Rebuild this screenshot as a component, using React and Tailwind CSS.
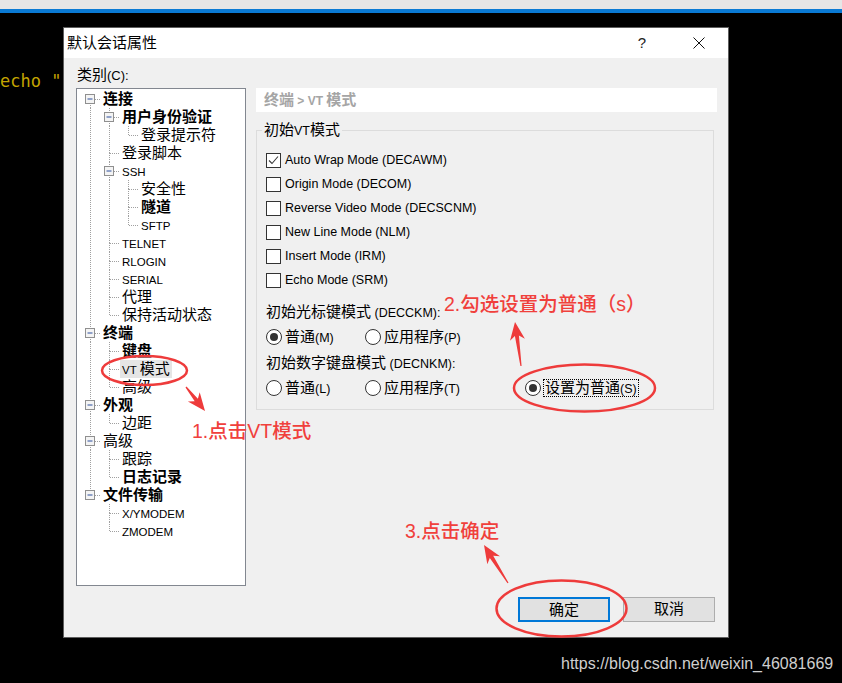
import React from 'react';

const CJK = /([\u2e80-\u9fff\u3000-\u303f\uff00-\uffef]+)/;

// split mixed text so the CJK runs and the latin runs get their own size
function Mixed({ text, cjk = 'text-[15px]', lat = 'text-[12.5px]' }) {
  return (
    <span className="whitespace-pre">
      {text
        .split(CJK)
        .filter(Boolean)
        .map((s, i) => (
          <span key={i} className={CJK.test(s) ? cjk : lat}>
            {s}
          </span>
        ))}
    </span>
  );
}

const TREE = [
  {
    t: '连接', b: true, c: [
      { t: '用户身份验证', b: true, c: [{ t: '登录提示符' }] },
      { t: '登录脚本' },
      { t: 'SSH', c: [{ t: '安全性' }, { t: '隧道', b: true }, { t: 'SFTP' }] },
      { t: 'TELNET' },
      { t: 'RLOGIN' },
      { t: 'SERIAL' },
      { t: '代理' },
      { t: '保持活动状态' },
    ],
  },
  { t: '终端', b: true, c: [{ t: '键盘', b: true }, { t: 'VT 模式', sel: true }, { t: '高级' }] },
  { t: '外观', b: true, c: [{ t: '边距' }] },
  { t: '高级', c: [{ t: '跟踪' }, { t: '日志记录', b: true }] },
  { t: '文件传输', b: true, c: [{ t: 'X/YMODEM' }, { t: 'ZMODEM' }] },
];

function flatten(nodes, depth, guides, out) {
  nodes.forEach((n, i) => {
    const last = i === nodes.length - 1;
    out.push({ ...n, depth, guides, last, first: depth === 0 && i === 0 });
    if (n.c) flatten(n.c, depth + 1, [...guides, !last], out);
  });
  return out;
}

const ROWS = flatten(TREE, 0, [], []);
const DOT = { stroke: '#a0a0a0', strokeDasharray: '1 1', strokeWidth: 1 };

function Guide({ through }) {
  return (
    <svg width="19" height="18" className="shrink-0">
      {through && <line x1="9.5" y1="0" x2="9.5" y2="18" {...DOT} />}
    </svg>
  );
}

function Elbow({ first, last, box }) {
  return (
    <svg width="19" height="18" className="shrink-0">
      {!first && <line x1="9.5" y1="0" x2="9.5" y2="9" {...DOT} />}
      {!last && <line x1="9.5" y1="9" x2="9.5" y2="18" {...DOT} />}
      <line x1="10" y1="9.5" x2="19" y2="9.5" {...DOT} />
      {box && (
        <g>
          <rect x="4.5" y="4.5" width="9" height="9" fill="#f4f4f4" stroke="#8f8f8f" />
          <line x1="6.5" y1="9" x2="11.5" y2="9" stroke="#2c4f9c" strokeWidth="1" />
        </g>
      )}
    </svg>
  );
}

function Tree() {
  return (
    <div className="w-[170px] h-[498px] shrink-0 bg-white border border-[#828790] pl-[4px] pt-[1px]">
      {ROWS.map((r, i) => (
        <div key={i} className="flex h-[18px] items-center">
          {r.guides.map((g, j) => (
            <Guide key={j} through={g} />
          ))}
          <Elbow first={r.first} last={r.last} box={!!r.c} />
          <span
            className={`ml-[1px] px-[2px] h-[18px] leading-[18px] whitespace-nowrap text-black ${r.b ? 'font-bold' : ''} ${r.sel ? 'bg-[#e5e5e5]' : ''}`}
          >
            <Mixed text={r.t} cjk="text-[15px]" lat="text-[11.5px]" />
          </span>
        </div>
      ))}
    </div>
  );
}

function Checkbox({ checked }) {
  return (
    <div className="w-[15px] h-[15px] shrink-0 border border-[#333] bg-white">
      {checked && (
        <svg width="13" height="13" viewBox="0 0 13 13">
          <polyline points="2,6.5 5,9.5 11,2.5" fill="none" stroke="#3a3a3a" strokeWidth="1.1" />
        </svg>
      )}
    </div>
  );
}

function Radio({ checked }) {
  return (
    <div className="w-[16px] h-[16px] shrink-0 rounded-full border border-[#333] bg-white flex items-center justify-center">
      {checked && <div className="w-[8px] h-[8px] rounded-full bg-[#333]" />}
    </div>
  );
}

const CHECKS = [
  ['Auto Wrap Mode (DECAWM)', true],
  ['Origin Mode (DECOM)', false],
  ['Reverse Video Mode (DECSCNM)', false],
  ['New Line Mode (NLM)', false],
  ['Insert Mode (IRM)', false],
  ['Echo Mode (SRM)', false],
];

function VtPanel() {
  return (
    <div className="flex-1 flex flex-col">
      <div className="h-[24px] bg-white flex items-center pl-[8px] font-bold text-[#a5a5a5]">
        <Mixed text="终端 > VT 模式" lat="text-[12px]" />
      </div>

      <fieldset className="mt-[9px] mr-[3px] border border-[#dcdcdc] pl-[9px] pr-[9px] pt-[9px] pb-[9px]">
        <legend className="-ml-[4px] px-[2px] h-[18px] leading-[18px] text-black">
          <Mixed text="初始VT模式" />
        </legend>

        {CHECKS.map(([label, on]) => (
          <div key={label} className="h-[24px] flex items-center">
            <Checkbox checked={on} />
            <span className="ml-[4px] text-[12.5px] text-black">{label}</span>
          </div>
        ))}

        <div className="mt-[10px] h-[20px] flex items-center text-black">
          <Mixed text="初始光标键模式 (DECCKM):" />
        </div>
        <div className="mt-[3px] h-[24px] flex items-center text-black">
          <div className="w-[99px] flex items-center">
            <Radio checked />
            <span className="ml-[3px]"><Mixed text="普通(M)" /></span>
          </div>
          <div className="flex items-center">
            <Radio />
            <span className="ml-[3px]"><Mixed text="应用程序(P)" /></span>
          </div>
        </div>

        <div className="mt-[4px] h-[20px] flex items-center text-black">
          <Mixed text="初始数字键盘模式 (DECNKM):" />
        </div>
        <div className="mt-[3px] h-[24px] flex items-center text-black">
          <div className="w-[99px] flex items-center">
            <Radio />
            <span className="ml-[3px]"><Mixed text="普通(L)" /></span>
          </div>
          <div className="w-[160px] flex items-center">
            <Radio />
            <span className="ml-[3px]"><Mixed text="应用程序(T)" /></span>
          </div>
          <div className="flex items-center">
            <Radio checked />
            <span className="ml-[2px] px-[1px] h-[18px] leading-[16px] border border-dotted border-black">
              <Mixed text="设置为普通(S)" />
            </span>
          </div>
        </div>
      </fieldset>
    </div>
  );
}

function arrow(x1, y1, x2, y2) {
  const len = Math.hypot(x2 - x1, y2 - y1);
  const ux = (x2 - x1) / len;
  const uy = (y2 - y1) / len;
  const nx = -uy;
  const ny = ux;
  const L = 17;
  const bx = x2 - ux * L;
  const by = y2 - uy * L;
  const p = [
    [x1 + nx * 0.6, y1 + ny * 0.6],
    [bx + ux * 3 + nx * 2, by + uy * 3 + ny * 2],
    [bx - ux * 1 + nx * 7.5, by - uy * 1 + ny * 7.5],
    [x2, y2],
    [bx - ux * 1 - nx * 7.5, by - uy * 1 - ny * 7.5],
    [bx + ux * 3 - nx * 2, by + uy * 3 - ny * 2],
    [x1 - nx * 0.6, y1 - ny * 0.6],
  ];
  return p.map((q) => q.map((v) => v.toFixed(1)).join(',')).join(' ');
}

function Annotations() {
  const red = '#ee3b3b';
  return (
    <svg width="842" height="683" className="absolute left-0 top-0 pointer-events-none">
      <ellipse cx="144.5" cy="370.5" rx="42.5" ry="14.5" fill="none" stroke={red} strokeWidth="2.5" />
      <ellipse cx="584.5" cy="388" rx="70.5" ry="23.5" fill="none" stroke={red} strokeWidth="2.5" />
      <ellipse cx="561.5" cy="608.5" rx="65" ry="28" fill="none" stroke={red} strokeWidth="2.5" />
      <polygon points={arrow(186, 387, 205, 411)} fill={red} />
      <polygon points={arrow(521, 366, 515, 322)} fill={red} />
      <polygon points={arrow(508, 583, 484, 545)} fill={red} />
    </svg>
  );
}

export default function App() {
  return (
    <div className="relative w-[842px] h-[683px] overflow-hidden bg-black font-['Liberation_Sans','Noto_Sans_CJK_SC',sans-serif]">
      <div className="h-[9px] bg-[#e6e6e6]" />
      <div className="h-[4px] bg-[#0a7ad4]" />

      {/* terminal line behind the dialog */}
      <div className="mt-[57px] h-[22px] leading-[22px] text-[17px] text-[#c4a400] whitespace-pre font-['DejaVu_Sans_Mono',monospace]">
        echo "
      </div>

      {/* dialog window */}
      <div className="absolute left-[63px] top-[27px] w-[666px] h-[611px] border border-[#5e5e5e] bg-[#f0f0f0] flex flex-col">
        <div className="h-[30px] shrink-0 bg-white flex items-center pl-[3px]">
          <span className="text-[15px] text-black">默认会话属性</span>
          <span className="ml-auto mr-[47px] text-[15px] text-[#222]">?</span>
          <svg width="12" height="12" className="mr-[23px]">
            <line x1="0.5" y1="0.5" x2="11.5" y2="11.5" stroke="#111" strokeWidth="1" />
            <line x1="11.5" y1="0.5" x2="0.5" y2="11.5" stroke="#111" strokeWidth="1" />
          </svg>
        </div>

        <div className="flex-1 flex flex-col pl-[12px] pr-[11px] pt-[8px] pb-[15px]">
          <div className="h-[18px] leading-[18px] pl-[1px] text-black">
            <Mixed text="类别(C):" lat="text-[13px]" />
          </div>
          <div className="mt-[4px] flex gap-[10px]">
            <Tree />
            <VtPanel />
          </div>
          <div className="mt-[11px] flex justify-end gap-[13px] pr-[2px]">
            <button className="w-[92px] h-[25px] border-2 border-[#0078d7] bg-[#e1e1e1] text-[15px] text-black">
              确定
            </button>
            <button className="w-[92px] h-[25px] border border-[#adadad] bg-[#e1e1e1] text-[15px] text-black">
              取消
            </button>
          </div>
        </div>
      </div>

      <Annotations />

      <div className="absolute left-[192px] top-[419px] h-[24px] leading-[24px] text-[19.5px] font-medium text-[#f0403c] whitespace-nowrap">
        1.点击VT模式
      </div>
      <div className="absolute left-[444px] top-[292px] h-[24px] leading-[24px] text-[19.5px] font-medium text-[#f0403c] whitespace-nowrap">
        2.勾选设置为普通（s）
      </div>
      <div className="absolute left-[405px] top-[519px] h-[24px] leading-[24px] text-[19.5px] font-medium text-[#f0403c] whitespace-nowrap">
        3.点击确定
      </div>

      <div className="absolute left-[561px] top-[655px] h-[18px] leading-[18px] text-[16px] text-[#cfcfcf] whitespace-nowrap">
        https://blog.csdn.net/weixin_46081669
      </div>
    </div>
  );
}
